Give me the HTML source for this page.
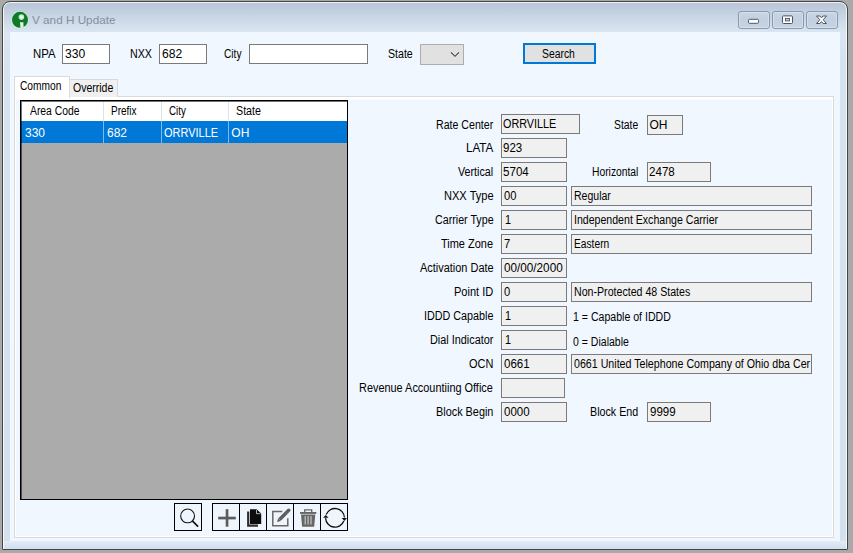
<!DOCTYPE html>
<html>
<head>
<meta charset="utf-8">
<title>V and H Update</title>
<style>
html,body{margin:0;padding:0;}
body{width:853px;height:553px;overflow:hidden;background:#a9a9a9;font-family:"Liberation Sans",sans-serif;font-size:12px;color:#000;position:relative;}
*{box-sizing:border-box;}
.abs{position:absolute;}
#win{position:absolute;left:2px;top:1px;width:846px;height:549px;border:1px solid #454545;border-radius:8px 8px 1px 1px;background:linear-gradient(#b6c4d6 0px,#c3d0e0 10px,#d3dfec 24px,#dbe6f2 31px,#d5e2f0 60px,#d3e0ee 100%);box-shadow:inset 0 0 0 1px rgba(255,255,255,.8);}
#client{position:absolute;left:10px;top:32px;width:830px;height:509px;background:#f0f7ff;}
.t{position:absolute;white-space:pre;line-height:14px;height:14px;transform-origin:0 0;}
.in{position:absolute;height:20px;border:1px solid #7a7a7a;background:#fff;}
.ro{background:#f0f0f0;}
.capbtn{position:absolute;top:11px;height:18px;border:1px solid #8898ae;border-radius:3px;background:linear-gradient(#c9d5e4,#c2cfe0 50%,#c7d3e3);box-shadow:inset 0 0 0 1px rgba(255,255,255,.3);}
.tb{position:absolute;top:503px;width:28px;height:28px;border:1px solid #000;background:#eff5fd;}
.tb svg{position:absolute;left:0;top:0;}
</style>
</head>
<body>
<div id="win"></div>
<div class="abs" style="left:4px;top:541px;width:842px;height:8px;background:linear-gradient(#e3edf8,#d6e3f0 60%,#d0ddeb)"></div>
<div id="client"></div>

<!-- title bar -->
<svg class="abs" style="left:11px;top:11px" width="18" height="19" viewBox="0 0 18 19">
  <circle cx="9" cy="8.8" r="8.8" fill="#cdeed8" opacity=".75"/>
  <circle cx="9" cy="8.8" r="8" fill="#0f7a26"/>
  <circle cx="10.4" cy="6.1" r="2.8" fill="#c4ead0"/>
  <circle cx="10.4" cy="6.1" r="1.4" fill="#f4fbf6"/>
  <path d="M8.9 11.2h3.5l.2 5.4-3 1.2z" fill="#dcf1e2"/>
</svg>
<div class="capbtn" style="left:738px;width:32px"></div>
<div class="capbtn" style="left:772px;width:32px"></div>
<div class="capbtn" style="left:806px;width:32px"></div>
<svg class="abs" style="left:730px;top:4px" width="120" height="32" viewBox="730 4 120 32">
  <rect x="748.5" y="19.3" width="10" height="4" rx="1" fill="#fff" stroke="#4b5563" stroke-width="1"/>
  <rect x="782.5" y="15.9" width="10" height="7.6" rx="1" fill="#fff" stroke="#4b5563" stroke-width="1"/>
  <rect x="785.5" y="18.4" width="4" height="2.5" fill="#c3cfde" stroke="#4b5563" stroke-width=".9"/>
  <path d="M816.5 16h3.4l1.6 1.9 1.6-1.9h3.4l-3.3 3.75 3.3 3.75h-3.4l-1.6-1.9-1.6 1.9h-3.4l3.3-3.75z" fill="#fff" stroke="#4b5563" stroke-width="1" stroke-linejoin="round"/>
</svg>

<!-- search row -->
<div class="in" style="left:62px;top:44px;width:48px"></div>
<div class="in" style="left:159px;top:44px;width:48px"></div>
<div class="in" style="left:249px;top:44px;width:119px"></div>
<div class="in" style="left:420px;top:44px;width:44px;height:21px;background:#e1e1e1;border-color:#adadad"></div>
<svg class="abs" style="left:450px;top:51px" width="10" height="7" viewBox="0 0 10 7"><path d="M1 1.3l4 4 4-4" fill="none" stroke="#444" stroke-width="1.1"/></svg>
<div class="abs" style="left:523px;top:43px;width:73px;height:21px;border:2px solid #0078d7;background:#e1e1e1;"></div>

<!-- tabs -->
<div class="abs" style="left:14px;top:96px;width:820px;height:442px;border:1px solid #dadada;background:#f0f7ff;box-shadow:inset 0 0 0 1px #fff;"></div>
<div class="abs" style="left:15px;top:97px;width:818px;height:3px;background:linear-gradient(#fff,#fff 60%,#f6faff)"></div>
<div class="abs" style="left:69px;top:79px;width:49px;height:18px;border:1px solid #d9d9d9;border-bottom:none;background:#f0f0f0;"></div>
<div class="abs" style="left:14px;top:76px;width:56px;height:22px;border:1px solid #dadada;border-bottom:none;background:#fff;"></div>

<!-- grid -->
<div class="abs" style="left:20px;top:100px;width:328px;height:400px;background:#ababab;"></div>
<div class="abs" style="left:21px;top:101px;width:326px;height:20px;background:#fff;"></div>
<div class="abs" style="left:103px;top:101px;width:1px;height:20px;background:#e2e2e2"></div>
<div class="abs" style="left:161px;top:101px;width:1px;height:20px;background:#e2e2e2"></div>
<div class="abs" style="left:228px;top:101px;width:1px;height:20px;background:#e2e2e2"></div>
<div class="abs" style="left:21px;top:121px;width:326px;height:22px;background:#0078d7;"></div>
<div class="abs" style="left:103px;top:121px;width:1px;height:22px;background:#7cbcf0"></div>
<div class="abs" style="left:161px;top:121px;width:1px;height:22px;background:#7cbcf0"></div>
<div class="abs" style="left:228px;top:121px;width:1px;height:22px;background:#7cbcf0"></div>
<div class="abs" style="left:20px;top:100px;width:328px;height:400px;border:1px solid #000;box-shadow:inset 1px 1px 0 rgba(0,0,0,.55);"></div>

<!-- toolbar -->
<div class="tb" style="left:174px;"></div>
<div class="tb" style="left:212px;"></div>
<div class="tb" style="left:239px;"></div>
<div class="tb" style="left:266px;"></div>
<div class="tb" style="left:293px;"></div>
<div class="tb" style="left:320px;"></div>

<svg class="abs" style="left:170px;top:500px" width="190" height="36" viewBox="170 500 190 36">
  <!-- magnifier -->
  <circle cx="187.6" cy="515.9" r="6.9" fill="none" stroke="#141414" stroke-width="1.1"/>
  <path d="M192.6 521.1L197.6 526.2" stroke="#141414" stroke-width="1.7" stroke-linecap="round"/>
  <!-- plus -->
  <rect x="218.2" y="516.7" width="17.6" height="2.7" fill="#5c5c5c"/>
  <rect x="225.7" y="509.2" width="2.7" height="17.5" fill="#5c5c5c"/>
  <!-- copy -->
  <path d="M248.2 511.6V525.6H258" fill="none" stroke="#2c2c2c" stroke-width="2.2"/>
  <path d="M250 509.2h6.6l4.6 4.4v10.5h-11.2z" fill="#0c0c0c"/>
  <path d="M256.5 509.9v3.8h4" fill="none" stroke="#d8d8d8" stroke-width=".8"/>
  <!-- edit -->
  <path d="M282.3 511.4H272.8V525.8H287.8V518.3" fill="none" stroke="#686868" stroke-width="1.5"/>
  <path d="M279.6 519.4L286.3 512.7" stroke="#5e5e5e" stroke-width="3.5"/>
  <path d="M287 512L288.7 510.3" stroke="#5e5e5e" stroke-width="3.5" stroke-linecap="round"/>
  <path d="M277 522.1l1.2-3.9 2.7 2.7z" fill="#5e5e5e"/>
  <!-- trash -->
  <path d="M304.7 512.2v-2.4h7v2.4" fill="none" stroke="#666" stroke-width="1.3"/>
  <rect x="300" y="512" width="16.3" height="1.9" fill="#666"/>
  <path d="M301 514.4h14.3l-1.1 12.3h-12.1z" fill="#666"/>
  <path d="M305.2 516v8.4M308.1 516v8.4M311 516v8.4" stroke="#cfcfcf" stroke-width="1.1"/>
  <!-- refresh -->
  <path d="M326.2 514.6A9.4 9.4 0 0 1 344.4 517.5" fill="none" stroke="#111" stroke-width="1.3"/>
  <path d="M343.8 521A9.4 9.4 0 0 1 325.6 518.1" fill="none" stroke="#111" stroke-width="1.3"/>
  <path d="M341.7 518h5.3l-2.6 2.9z" fill="#111"/>
  <path d="M323.1 517.8h5.5l-2.9-2.8z" fill="#111"/>
</svg>

<!-- form boxes -->
<div class="in ro" style="left:501px;top:114px;width:79px"></div>
<div class="in ro" style="left:647px;top:115px;width:36px"></div>
<div class="in ro" style="left:501px;top:138px;width:66px"></div>
<div class="in ro" style="left:501px;top:162px;width:66px"></div>
<div class="in ro" style="left:647px;top:162px;width:64px"></div>
<div class="in ro" style="left:501px;top:186px;width:66px"></div>
<div class="in ro" style="left:571px;top:186px;width:241px"></div>
<div class="in ro" style="left:501px;top:210px;width:66px"></div>
<div class="in ro" style="left:571px;top:210px;width:241px"></div>
<div class="in ro" style="left:501px;top:234px;width:66px"></div>
<div class="in ro" style="left:571px;top:234px;width:241px"></div>
<div class="in ro" style="left:501px;top:258px;width:66px"></div>
<div class="in ro" style="left:501px;top:282px;width:66px"></div>
<div class="in ro" style="left:571px;top:282px;width:241px"></div>
<div class="in ro" style="left:501px;top:306px;width:66px"></div>
<div class="in ro" style="left:501px;top:330px;width:66px"></div>
<div class="in ro" style="left:501px;top:354px;width:66px"></div>
<div class="in ro" style="left:571px;top:354px;width:241px"></div>
<div class="in ro" style="left:501px;top:378px;width:64px"></div>
<div class="in ro" style="left:501px;top:402px;width:66px"></div>
<div class="in ro" style="left:647px;top:402px;width:64px"></div>

<div class="t" style="left:31.99px;top:13.02px;color:#858f9d;font-size:11.5px;transform:scaleX(1.0200)">V and H Update</div>
<div class="t" style="left:32.93px;top:47.04px;transform:scaleX(0.9475)">NPA</div>
<div class="t" style="left:129.95px;top:47.04px;transform:scaleX(0.8908)">NXX</div>
<div class="t" style="left:224.28px;top:47.04px;transform:scaleX(0.8438)">City</div>
<div class="t" style="left:387.86px;top:47.04px;transform:scaleX(0.8842)">State</div>
<div class="t" style="left:64.90px;top:47.04px;transform:scaleX(1.0089)">330</div>
<div class="t" style="left:161.90px;top:47.04px;transform:scaleX(1.0089)">682</div>
<div class="t" style="left:542.37px;top:46.84px;transform:scaleX(0.8641)">Search</div>
<div class="t" style="left:20.28px;top:78.84px;transform:scaleX(0.8493)">Common</div>
<div class="t" style="left:73.46px;top:80.84px;transform:scaleX(0.8753)">Override</div>
<div class="t" style="left:29.87px;top:104.14px;transform:scaleX(0.8621)">Area Code</div>
<div class="t" style="left:110.88px;top:104.14px;transform:scaleX(0.8320)">Prefix</div>
<div class="t" style="left:168.59px;top:104.14px;transform:scaleX(0.8133)">City</div>
<div class="t" style="left:236.05px;top:104.14px;transform:scaleX(0.8916)">State</div>
<div class="t" style="left:24.90px;top:125.54px;color:#fff;transform:scaleX(0.9984)">330</div>
<div class="t" style="left:106.90px;top:125.54px;color:#fff;transform:scaleX(0.9984)">682</div>
<div class="t" style="left:164.04px;top:125.54px;color:#fff;transform:scaleX(0.9150)">ORRVILLE</div>
<div class="t" style="left:231.30px;top:125.54px;color:#fff;transform:scaleX(1.0000)">OH</div>
<div class="t" style="left:435.96px;top:117.54px;transform:scaleX(0.8838)">Rate Center</div>
<div class="t" style="left:465.82px;top:140.54px;transform:scaleX(0.9694)">LATA</div>
<div class="t" style="left:458.05px;top:164.54px;transform:scaleX(0.8916)">Vertical</div>
<div class="t" style="left:443.54px;top:188.54px;transform:scaleX(0.9221)">NXX Type</div>
<div class="t" style="left:434.55px;top:212.54px;transform:scaleX(0.8903)">Carrier Type</div>
<div class="t" style="left:441.14px;top:236.54px;transform:scaleX(0.9140)">Time Zone</div>
<div class="t" style="left:419.54px;top:260.54px;transform:scaleX(0.9120)">Activation Date</div>
<div class="t" style="left:453.84px;top:284.54px;transform:scaleX(0.9211)">Point ID</div>
<div class="t" style="left:423.75px;top:308.54px;transform:scaleX(0.8969)">IDDD Capable</div>
<div class="t" style="left:429.75px;top:332.54px;transform:scaleX(0.9054)">Dial Indicator</div>
<div class="t" style="left:468.84px;top:356.54px;transform:scaleX(0.9115)">OCN</div>
<div class="t" style="left:359.30px;top:380.54px;transform:scaleX(0.9093)">Revenue Accountiing Office</div>
<div class="t" style="left:435.75px;top:404.54px;transform:scaleX(0.9058)">Block Begin</div>
<div class="t" style="left:613.77px;top:117.54px;transform:scaleX(0.8620)">State</div>
<div class="t" style="left:591.57px;top:164.54px;transform:scaleX(0.8580)">Horizontal</div>
<div class="t" style="left:589.65px;top:404.54px;transform:scaleX(0.8938)">Block End</div>
<div class="t" style="left:503.15px;top:116.54px;transform:scaleX(0.9013)">ORRVILLE</div>
<div class="t" style="left:649.50px;top:117.54px;transform:scaleX(1.0000)">OH</div>
<div class="t" style="left:503.32px;top:140.54px;transform:scaleX(0.9563)">923</div>
<div class="t" style="left:503.32px;top:164.54px;transform:scaleX(0.9649)">5704</div>
<div class="t" style="left:649.32px;top:164.54px;transform:scaleX(0.9649)">2478</div>
<div class="t" style="left:503.83px;top:188.54px;transform:scaleX(0.9305)">00</div>
<div class="t" style="left:574.16px;top:188.54px;transform:scaleX(0.8774)">Regular</div>
<div class="t" style="left:505.15px;top:212.54px;transform:scaleX(0.9000)">1</div>
<div class="t" style="left:574.16px;top:212.54px;transform:scaleX(0.8815)">Independent Exchange Carrier</div>
<div class="t" style="left:503.83px;top:236.54px;transform:scaleX(0.9319)">7</div>
<div class="t" style="left:574.17px;top:236.54px;transform:scaleX(0.8523)">Eastern</div>
<div class="t" style="left:503.81px;top:260.54px;transform:scaleX(0.9769)">00/00/2000</div>
<div class="t" style="left:503.83px;top:284.54px;transform:scaleX(0.9319)">0</div>
<div class="t" style="left:574.16px;top:284.54px;transform:scaleX(0.8848)">Non-Protected 48 States</div>
<div class="t" style="left:505.15px;top:308.54px;transform:scaleX(0.9000)">1</div>
<div class="t" style="left:572.76px;top:309.54px;transform:scaleX(0.8804)">1 = Capable of IDDD</div>
<div class="t" style="left:505.15px;top:332.54px;transform:scaleX(0.9000)">1</div>
<div class="t" style="left:572.56px;top:334.64px;transform:scaleX(0.8769)">0 = Dialable</div>
<div class="t" style="left:503.82px;top:356.54px;transform:scaleX(0.9610)">0661</div>
<div class="t" style="left:573.86px;top:356.54px;transform:scaleX(0.8880)">0661 United Telephone Company of Ohio dba Cer</div>
<div class="t" style="left:503.82px;top:404.54px;transform:scaleX(0.9610)">0000</div>
<div class="t" style="left:649.82px;top:404.54px;transform:scaleX(0.9610)">9999</div>

</body>
</html>
